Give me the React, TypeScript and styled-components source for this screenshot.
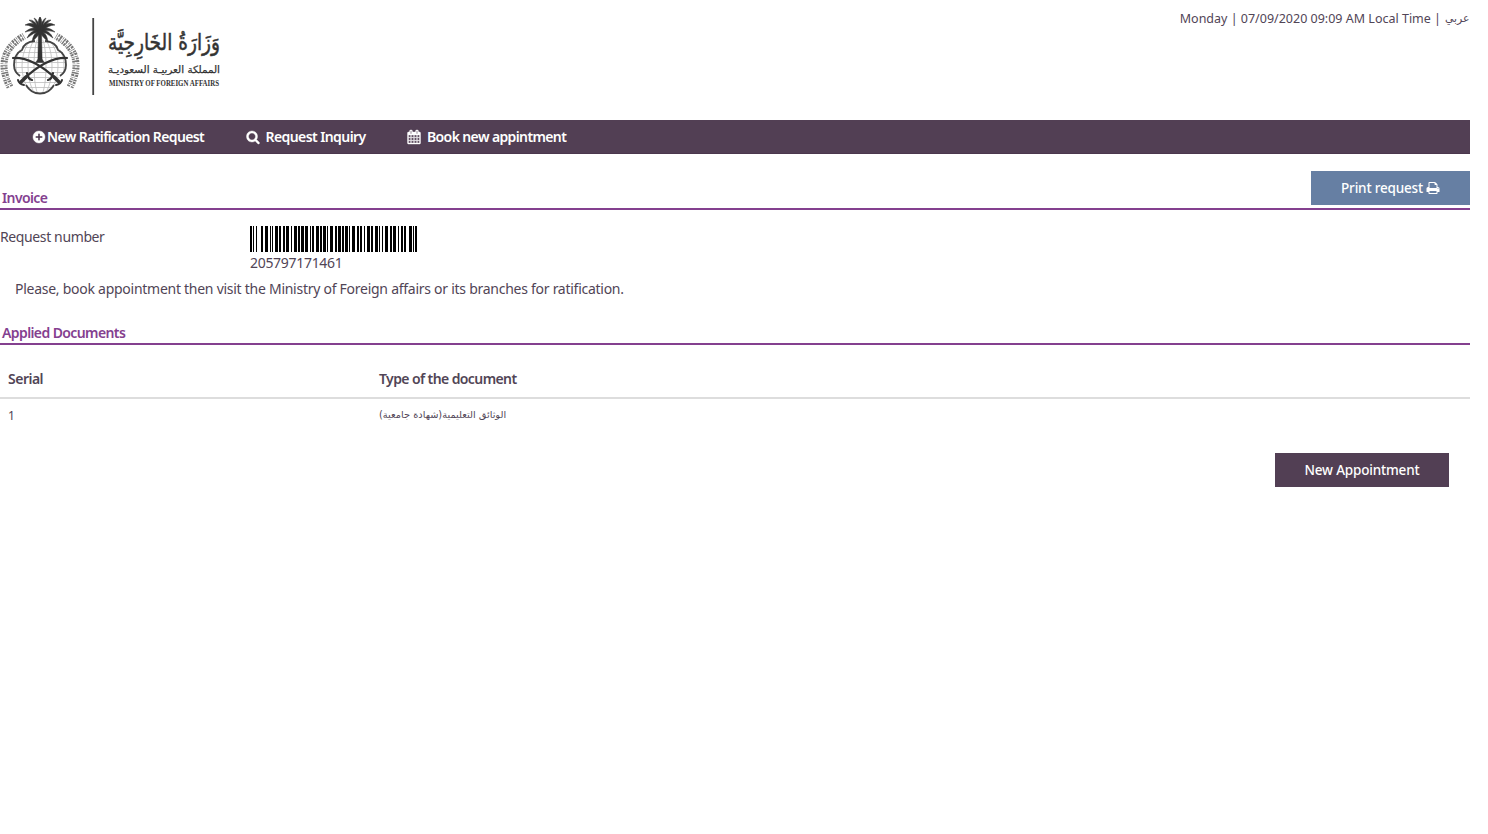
import React from "react";
import styled, { createGlobalStyle } from "styled-components";

const GlobalStyle = createGlobalStyle`
  * { box-sizing: border-box; }
  body {
    margin: 0;
    background: #fff;
    color: #514556;
    font: 14px/20px "Noto Sans", "DejaVu Sans", sans-serif;
  }
`;

const Page = styled.div`
  width: 1470px;
  min-height: 834px;
`;

const Header = styled.header`
  height: 120px;
  display: flex;
  justify-content: space-between;
  align-items: flex-start;
`;

const Brand = styled.svg`
  display: block;
  width: 230px;
  height: 104px;
  overflow: visible;
`;

const TopLine = styled.div`
  display: flex;
  gap: 4px;
  padding-top: 9px;
  font-size: 12.5px;
  white-space: pre;
`;

const ArabicLink = styled.a<{ $width: number }>`
  display: block;
  width: ${(p) => p.$width}px;
  font-family: "DejaVu Sans", sans-serif;
  font-size: 10.8px;
  white-space: nowrap;
`;

const NavBar = styled.nav`
  display: flex;
  height: 34px;
  padding-left: 32px;
  background: #523f54;
  border-bottom: 1px solid #4b374d;
`;

const NavItem = styled.a<{ $width: number; $gap: number; $spacing: number }>`
  display: flex;
  align-items: center;
  gap: ${(p) => p.$gap}px;
  width: ${(p) => p.$width}px;
  color: #fff;
  font-weight: 600;
  letter-spacing: ${(p) => p.$spacing}px;
  white-space: nowrap;
`;

const Glyph = styled.svg`
  display: block;
  flex: none;
  fill: currentColor;
`;

const SectionBar = styled.div<{ $height: number }>`
  display: flex;
  justify-content: space-between;
  align-items: flex-end;
  height: ${(p) => p.$height}px;
  border-bottom: 2px solid #84408f;
`;

const SectionTitle = styled.h2<{ $spacing: number }>`
  margin: 0;
  padding-left: 2px;
  color: #84408f;
  font-size: 14px;
  line-height: 20px;
  font-weight: 600;
  letter-spacing: ${(p) => p.$spacing}px;
`;

const Button = styled.button<{ $tone: string; $width: number }>`
  display: flex;
  align-items: center;
  justify-content: center;
  gap: 3px;
  width: ${(p) => p.$width}px;
  height: 34px;
  padding: 0;
  border: 0;
  background: ${(p) => p.$tone};
  color: #fff;
  font: 500 13.5px/20px "Noto Sans", sans-serif;
  letter-spacing: -0.18px;
  white-space: nowrap;
`;

const PrintSlot = styled.div`
  padding-bottom: 3px;
`;

const RequestRow = styled.div`
  display: grid;
  grid-template-columns: 250px 1fr;
  padding-top: 16px;
`;

const Label = styled.div`
  padding-top: 1px;
  letter-spacing: -0.38px;
`;

const Barcode = styled.svg`
  display: block;
  width: 168px;
  height: 26px;
  fill: #000;
`;

const CodeValue = styled.div`
  margin-top: 1px;
  letter-spacing: -0.3px;
`;

const Note = styled.p`
  margin: 0;
  padding: 6px 15px 0;
  letter-spacing: -0.265px;
  white-space: nowrap;
`;

const Table = styled.div`
  display: grid;
  grid-template-columns: 371px 1fr;
  padding-top: 17px;
`;

const HeadCell = styled.div<{ $spacing: number }>`
  height: 37px;
  padding: 7px 8px 0;
  border-bottom: 2px solid #ddd;
  font-weight: 600;
  color: #514556;
  letter-spacing: ${(p) => p.$spacing}px;
`;

const Cell = styled.div`
  height: 54px;
  padding: 7px 8px 0;
  font-size: 12px;
`;

const ArabicText = styled.span`
  display: block;
  font-family: "DejaVu Sans", sans-serif;
  font-size: 9.8px;
  line-height: 18px;
`;

const Actions = styled.div`
  display: flex;
  justify-content: flex-end;
  padding-right: 21px;
`;

const icons = {
  plus: "M1344 960v-128q0-26-19-45t-45-19h-256v-256q0-26-19-45t-45-19h-128q-26 0-45 19t-19 45v256h-256q-26 0-45 19t-19 45v128q0 26 19 45t45 19h256v256q0 26 19 45t45 19h128q26 0 45-19t19-45v-256h256q26 0 45-19t19-45zm320-64q0 209-103 385.5t-279.5 279.5-385.5 103-385.5-103-279.5-279.5-103-385.5 103-385.5 279.5-279.5 385.5-103 385.5 103 279.5 279.5 103 385.5z",
  search: "M1216 832q0-185-131.5-316.5t-316.5-131.5-316.5 131.5-131.5 316.5 131.5 316.5 316.5 131.5 316.5-131.5 131.5-316.5zm512 832q0 52-38 90t-90 38q-54 0-90-38l-343-342q-179 124-399 124-143 0-273.5-55.5t-225-150-150-225-55.5-273.5 55.5-273.5 150-225 225-150 273.5-55.5 273.5 55.5 225 150 150 225 55.5 273.5q0 220-124 399l343 343q37 37 37 90z",
  calendar: "M192 1664h288v-288h-288v288zm352 0h320v-288h-320v288zm-352-352h288v-320h-288v320zm352 0h320v-320h-320v320zm-352-384h288v-288h-288v288zm736 736h320v-288h-320v288zm-384-736h320v-288h-320v288zm768 736h288v-288h-288v288zm-384-352h320v-320h-320v320zm-352-864v-288q0-13-9.5-22.5t-22.5-9.5h-64q-13 0-22.5 9.5t-9.5 22.5v288q0 13 9.5 22.5t22.5 9.5h64q13 0 22.5-9.5t9.5-22.5zm736 864h288v-320h-288v320zm-384-384h320v-288h-320v288zm384 0h288v-288h-288v288zm32-480v-288q0-13-9.5-22.5t-22.5-9.5h-64q-13 0-22.5 9.5t-9.5 22.5v288q0 13 9.5 22.5t22.5 9.5h64q13 0 22.5-9.5t9.5-22.5zm384-64v1280q0 52-38 90t-90 38h-1408q-52 0-90-38t-38-90v-1280q0-52 38-90t90-38h128v-96q0-66 47-113t113-47h64q66 0 113 47t47 113v96h384v-96q0-66 47-113t113-47h64q66 0 113 47t47 113v96h128q52 0 90 38t38 90z",
  print: "M448 1536h896v-256h-896v256zm0-640h896v-384h-160q-40 0-68-28t-28-68v-160h-640v640zm1152 64q0-26-19-45t-45-19-45 19-19 45 19 45 45 19 45-19 19-45zm128 0v416q0 13-9.5 22.5t-22.5 9.5h-224v160q0 40-28 68t-68 28h-960q-40 0-68-28t-28-68v-160h-224q-13 0-22.5-9.5t-9.5-22.5v-416q0-79 56.5-135.5t135.5-56.5h64v-544q0-40 28-68t68-28h672q40 0 88 20t76 48l152 152q28 28 48 76t20 88v256h64q79 0 135.5 56.5t56.5 135.5z",
};

const Icon = ({ name, size = 14, bold = false }: { name: keyof typeof icons; size?: number; bold?: boolean }) => (
  <Glyph width={size} height={size} viewBox="0 0 1792 1792" overflow="visible">
    <path d={icons[name]} stroke={bold ? "currentColor" : "none"} strokeWidth="50" />
  </Glyph>
);

// Code 128 (set B) element widths for the digits 0-9.
const DIGITS = ["123122", "123221", "223211", "221132", "221231", "213212", "223112", "312131", "311222", "321122"];

function barcodePath(value: string) {
  const widths = ["211214", ...value.split("").map((d) => DIGITS[+d]), "321221", "2331112"].join("");
  let x = 0;
  let d = "";
  widths.split("").forEach((w, i) => {
    if (i % 2 === 0) d += `M${x} 0h${w}v26h-${w}z`;
    x += +w;
  });
  return d;
}

// Left half of the palm crown; the right half mirrors it.
const fronds = [
  "M40 30Q33 25 25 32Q32 29 40 32Z",
  "M40 30Q31 29 27 38Q34 32 40 32Z",
  "M40 30Q33 33 32 42Q37 37 41 32Z",
  "M40 30Q33 20 25 25Q32 25 39 32Z",
  "M40 30Q35 19 29 20Q34 23 38 31Z",
  "M40 30Q38 19 34 18Q37 22 38 31Z",
  "M40 31Q37 20 40 17Q42 21 41 31Z",
];

const ringLeft = "M10 87Q-7 54 24 36";
const ringRight = "M70 87Q87 54 56 36";

const Logo = () => (
  <Brand viewBox="0 0 230 104">
    <defs>
      <clipPath id="globe">
        <path d="M40 40q12 0 16 7q11 5 10 18q0 9-8 13q-4 16-18 16q-14 0-18-16q-8-4-8-13q-1-13 10-18q4-7 16-7z" />
      </clipPath>
    </defs>
    <g clipPath="url(#globe)" fill="none" stroke="#bcbcbc" strokeWidth=".8">
      <path d="M10 42.500h60M10 47.500h60M10 52.500h60M10 57.500h60M10 62.500h60M10 67.500h60M10 72.500h60M10 77.500h60M10 82.500h60M10 87.500h60" />
      <ellipse cx="40" cy="66" rx="6" ry="30" />
      <ellipse cx="40" cy="66" rx="12" ry="30" />
      <ellipse cx="40" cy="66" rx="18" ry="30" />
      <ellipse cx="40" cy="66" rx="24" ry="30" />
    </g>
    <g fill="none" stroke="#444" strokeWidth="1.800">
      <path d="M35 41Q24 42 22 50Q14 54 14 65Q14 72 20 76" />
      <path d="M45 41Q56 42 58 50Q66 54 66 65Q66 72 60 76" />
      <path d="M26 85Q31 93.500 40 93.500Q49 93.500 54 85" />
    </g>
    <g fill="#333" stroke="#333" strokeWidth=".5">
      {fronds.map((d) => (
        <path key={d} d={d} />
      ))}
      <g transform="matrix(-1 0 0 1 80 0)">
        {fronds.map((d) => (
          <path key={d} d={d} />
        ))}
      </g>
      <path d="M38.500 30h3l.6 29q1 2 2.500 3.500h-9.200q1.500-1.500 2.500-3.500z" />
    </g>
    <g fill="none" stroke="#333" strokeLinecap="round">
      <path d="M13 58Q33 57 56 79" strokeWidth="2.200" />
      <path d="M67 58Q47 57 24 79" strokeWidth="2.200" />
      <path d="M48 80Q52 79 53 73M32 80Q28 79 27 73" strokeWidth="2.200" />
      <path d="M54 77l5 5M26 77l-5 5" strokeWidth="3.600" />
      <path d="M56 85q5-1 6-5M24 85q-5-1-6-5" strokeWidth="2" />
    </g>
    <g fill="none" stroke="#777" strokeWidth="7">
      <path d={ringLeft} strokeDasharray="1.500 1 .7 1.100 2 .8" />
      <path d={ringRight} strokeDasharray="1.500 1 .7 1.100 2 .8" />
    </g>
    <g fill="none" stroke="#fff" strokeWidth="1.200" strokeDasharray="2 2">
      <path d={ringLeft} />
      <path d={ringRight} />
    </g>
    <path d="M92.300 18h1.800v77h-1.800z" fill="#444" />
    <g fill="#333" textAnchor="middle">
      <text x="164" y="50" fontFamily="DejaVu Sans, sans-serif" fontSize="23" stroke="#333" strokeWidth=".5" textLength="112" lengthAdjust="spacingAndGlyphs" direction="rtl">وَزَارَةُ الخَارِجِيَّة</text>
      <text x="164" y="73" fontFamily="DejaVu Sans, sans-serif" fontSize="10" stroke="#333" strokeWidth=".25" textLength="112" lengthAdjust="spacingAndGlyphs" direction="rtl">المملكة العربيـة السعوديـة</text>
      <text x="164" y="86" fontFamily="Liberation Serif, serif" fontSize="7.200" fontWeight="700" textLength="110" lengthAdjust="spacingAndGlyphs">MINISTRY OF FOREIGN AFFAIRS</text>
    </g>
  </Brand>
);

export default function App() {
  const requestNumber = "205797171461";
  return (
    <Page>
      <GlobalStyle />
      <Header>
        <Logo />
        <TopLine>
          <span>Monday | 07/09/2020 09:09 AM Local Time |</span>
          <ArabicLink $width={25} lang="ar">عربي</ArabicLink>
        </TopLine>
      </Header>
      <NavBar>
        <NavItem $width={214} $gap={1} $spacing={-0.62}><Icon name="plus" bold />New Ratification Request</NavItem>
        <NavItem $width={161} $gap={5.5} $spacing={-0.58}><Icon name="search" bold />Request Inquiry</NavItem>
        <NavItem $width={170} $gap={6} $spacing={-0.62}><Icon name="calendar" bold />Book new appintment</NavItem>
      </NavBar>
      <SectionBar $height={56}>
        <SectionTitle $spacing={-0.6}>Invoice</SectionTitle>
        <PrintSlot>
          <Button $tone="#667fa3" $width={159}>Print request <Icon name="print" /></Button>
        </PrintSlot>
      </SectionBar>
      <RequestRow>
        <Label>Request number</Label>
        <div>
          <Barcode viewBox="0 0 168 26" shapeRendering="crispEdges"><path d={barcodePath(requestNumber)} /></Barcode>
          <CodeValue>{requestNumber}</CodeValue>
        </div>
      </RequestRow>
      <Note>Please, book appointment then visit the Ministry of Foreign affairs or its branches for ratification.</Note>
      <SectionBar $height={46}>
        <SectionTitle $spacing={-0.6}>Applied Documents</SectionTitle>
      </SectionBar>
      <Table>
        <HeadCell $spacing={-0.5}>Serial</HeadCell>
        <HeadCell $spacing={-0.6}>Type of the document</HeadCell>
        <Cell>1</Cell>
        <Cell><ArabicText lang="ar">الوثائق التعليمية(شهادة جامعية)</ArabicText></Cell>
      </Table>
      <Actions>
        <Button $tone="#523f54" $width={174}>New Appointment</Button>
      </Actions>
    </Page>
  );
}
